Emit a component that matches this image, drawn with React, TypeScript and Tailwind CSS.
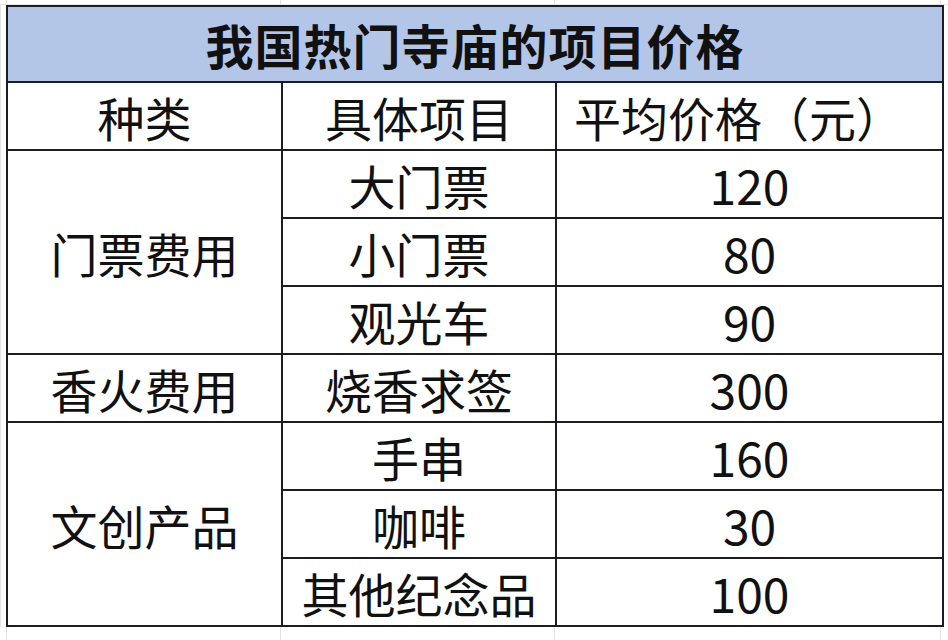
import React from "react";

const rows: { cat?: string; span?: number; item: string; price: string }[] = [
  { cat: "门票费用", span: 3, item: "大门票", price: "120" },
  { item: "小门票", price: "80" },
  { item: "观光车", price: "90" },
  { cat: "香火费用", span: 1, item: "烧香求签", price: "300" },
  { cat: "文创产品", span: 3, item: "手串", price: "160" },
  { item: "咖啡", price: "30" },
  { item: "其他纪念品", price: "100" },
];

export default function App() {
  const cell =
    "border-2 border-[#1b1c24] text-center align-middle p-0 leading-none";
  return (
    <div className="w-[948px] h-[640px] bg-white overflow-hidden text-[#111111] font-['Noto_Sans_CJK_SC','Microsoft_YaHei',sans-serif] flex flex-col">
      {/* top grid strip */}
      <div className="h-[5px] flex border-b border-[#e6e6e6]">
        <div className="w-[7px] border-r border-[#e3e3e3]" />
        <div className="w-[274px] border-r border-[#e3e3e3]" />
        <div className="w-[274px] border-r border-[#e3e3e3]" />
        <div className="w-[386px] border-r border-[#e3e3e3]" />
      </div>
      <div className="flex">
        <div className="w-[6px] border-l border-[#e3e3e3]" />
        <table className="border-collapse table-fixed w-[936px]">
          <colgroup>
            <col className="w-[275px]" />
            <col className="w-[274px]" />
            <col className="w-[387px]" />
          </colgroup>
          <tbody>
            <tr className="h-[76px]">
              <td
                colSpan={3}
                className={`${cell} bg-[#b4c6e7] text-[48px] font-bold tracking-[1px]`}
              >
                我国热门寺庙的项目价格
              </td>
            </tr>
            <tr className="h-[68px]">
              <td className={`${cell} text-[47px]`}>种类</td>
              <td className={`${cell} text-[47px]`}>具体项目</td>
              <td className={`${cell} text-[47px] pr-[22px]`}>平均价格（元）</td>
            </tr>
            {rows.map((r, i) => (
              <tr key={i} className="h-[68px]">
                {r.cat && (
                  <td rowSpan={r.span} className={`${cell} text-[47px]`}>
                    {r.cat}
                  </td>
                )}
                <td className={`${cell} text-[47px]`}>{r.item}</td>
                <td className={`${cell} text-[48px]`}>{r.price}</td>
              </tr>
            ))}
          </tbody>
        </table>
        <div className="flex-1" />
      </div>
      {/* bottom grid strip */}
      <div className="flex-1 flex">
        <div className="w-[7px] border-r border-[#e3e3e3]" />
        <div className="w-[274px] border-r border-[#e3e3e3]" />
        <div className="w-[274px] border-r border-[#e3e3e3]" />
        <div className="w-[386px] border-r border-[#e3e3e3]" />
      </div>
    </div>
  );
}
